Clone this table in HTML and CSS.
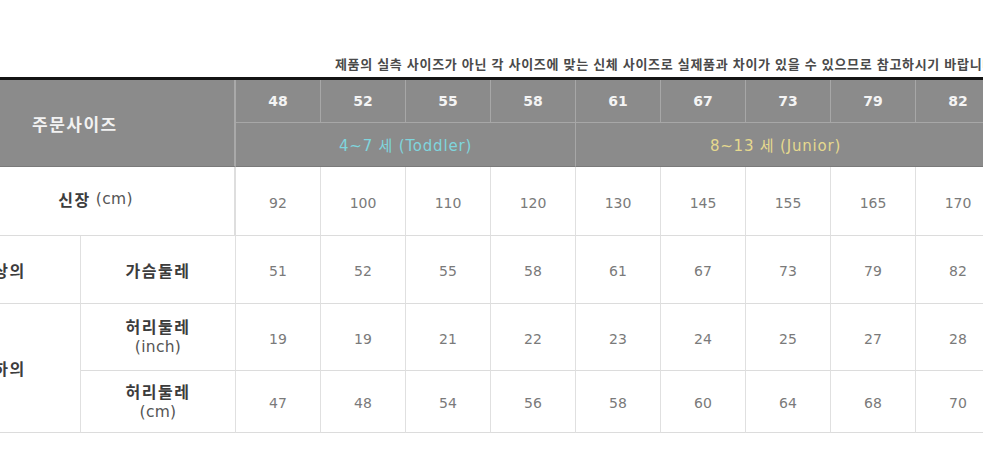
FILE: index.html
```html
<!DOCTYPE html>
<html lang="ko">
<head>
<meta charset="utf-8">
<title>사이즈 표</title>
<link rel="stylesheet" href="styles.css">
</head>
<body>
<div class="page">
  <div class="note"><span class="note-text">제품의 실측 사이즈가 아닌 각 사이즈에 맞는 신체 사이즈로 실제품과 차이가 있을 수 있으므로 참고하시기 바랍니다</span></div>
  <div class="chart">
    <div class="h h-label">주문사이즈</div>
    <div class="h h-num">48</div>
    <div class="h h-num">52</div>
    <div class="h h-num">55</div>
    <div class="h h-num">58</div>
    <div class="h h-num">61</div>
    <div class="h h-num">67</div>
    <div class="h h-num">73</div>
    <div class="h h-num">79</div>
    <div class="h h-num">82</div>
    <div class="h h-group toddler">4~7 세 (Toddler)</div>
    <div class="h h-group junior">8~13 세 (Junior)</div>

    <div class="c lbl span2"><b>신장</b><span class="unit">&nbsp;(cm)</span></div>
    <div class="c v">92</div><div class="c v">100</div><div class="c v">110</div><div class="c v">120</div><div class="c v">130</div><div class="c v">145</div><div class="c v">155</div><div class="c v">165</div><div class="c v">170</div>

    <div class="c lbl cat">상의</div>
    <div class="c lbl">가슴둘레</div>
    <div class="c v">51</div><div class="c v">52</div><div class="c v">55</div><div class="c v">58</div><div class="c v">61</div><div class="c v">67</div><div class="c v">73</div><div class="c v">79</div><div class="c v">82</div>

    <div class="c lbl cat rows2">하의</div>
    <div class="c lbl two"><b>허리둘레</b><span class="unit">(inch)</span></div>
    <div class="c v">19</div><div class="c v">19</div><div class="c v">21</div><div class="c v">22</div><div class="c v">23</div><div class="c v">24</div><div class="c v">25</div><div class="c v">27</div><div class="c v">28</div>

    <div class="c lbl two"><b>허리둘레</b><span class="unit">(cm)</span></div>
    <div class="c v">47</div><div class="c v">48</div><div class="c v">54</div><div class="c v">56</div><div class="c v">58</div><div class="c v">60</div><div class="c v">64</div><div class="c v">68</div><div class="c v">70</div>
  </div>
</div>
</body>
</html>
```

FILE: styles.css
```css
html, body {
  margin: 0;
  padding: 0;
  background: #ffffff;
  overflow: hidden;
}

.page {
  width: 1044px;
  margin-left: -43px;
}

.note {
  height: 77px;
  display: flex;
  justify-content: flex-end;
  align-items: flex-end;
  padding: 0 6px 5px 0;
  box-sizing: border-box;
}

.note-text {
  font-family: "Noto Sans CJK KR", sans-serif;
  font-size: 13px;
  line-height: 16px;
  font-weight: 700;
  letter-spacing: 0.7px;
  color: #4a4a4a;
  white-space: nowrap;
}

.chart {
  display: grid;
  grid-template-columns: 124px 155px repeat(9, 85px);
  grid-template-rows: 43px 44px 69px 68px 67px 62px;
  border-top: 3px solid #141414;
}

.h, .c {
  box-sizing: border-box;
  display: flex;
  align-items: center;
  justify-content: center;
}

.h {
  background: #8b8b8b;
  border-right: 1px solid #a7a7a7;
  border-bottom: 1px solid #a7a7a7;
}

.h-label {
  grid-column: 1 / 3;
  grid-row: 1 / 3;
  justify-content: flex-start;
  padding-left: 75px;
  font-family: "Noto Sans CJK KR", sans-serif;
  font-weight: 700;
  font-size: 17px;
  letter-spacing: 1.5px;
  color: #f2f2f2;
  border-bottom-color: #7a7a7a;
  border-right: 2px solid #a9a9a9;
}

.h-num {
  font-family: "DejaVu Sans", sans-serif;
  font-weight: 700;
  font-size: 14px;
  color: #f4f4f4;
}

.h-group {
  grid-row: 2;
  font-family: "DejaVu Sans", "Noto Sans CJK KR", sans-serif;
  font-size: 15px;
  letter-spacing: 0.8px;
  border-bottom-color: #7a7a7a;
}

.toddler {
  grid-column: 3 / 7;
  color: #7fd5dd;
}

.junior {
  grid-column: 7 / 12;
  color: #e6d98e;
  padding-right: 25px;
}

.c {
  background: #ffffff;
  border-right: 1px solid #e0e0e0;
  border-bottom: 1px solid #dcdcdc;
}

.lbl {
  font-family: "Noto Sans CJK KR", sans-serif;
  font-weight: 700;
  font-size: 16px;
  letter-spacing: 1.5px;
  color: #3c3c3c;
}

.lbl b {
  font-weight: 700;
}

.span2 {
  grid-column: 1 / 3;
  border-right: 2px solid #dedede;
  padding-bottom: 4px;
}

.cat {
  padding-right: 18px;
}

.rows2 {
  grid-row: span 2;
}

.two {
  flex-direction: column;
  line-height: 21px;
}

.unit {
  font-family: "DejaVu Sans", sans-serif;
  font-weight: 400;
  font-size: 15.5px;
  letter-spacing: 0.3px;
  color: #555555;
}

.v {
  font-family: "DejaVu Sans", sans-serif;
  font-size: 14px;
  color: #7a7a7a;
  padding-top: 3px;
}
```
